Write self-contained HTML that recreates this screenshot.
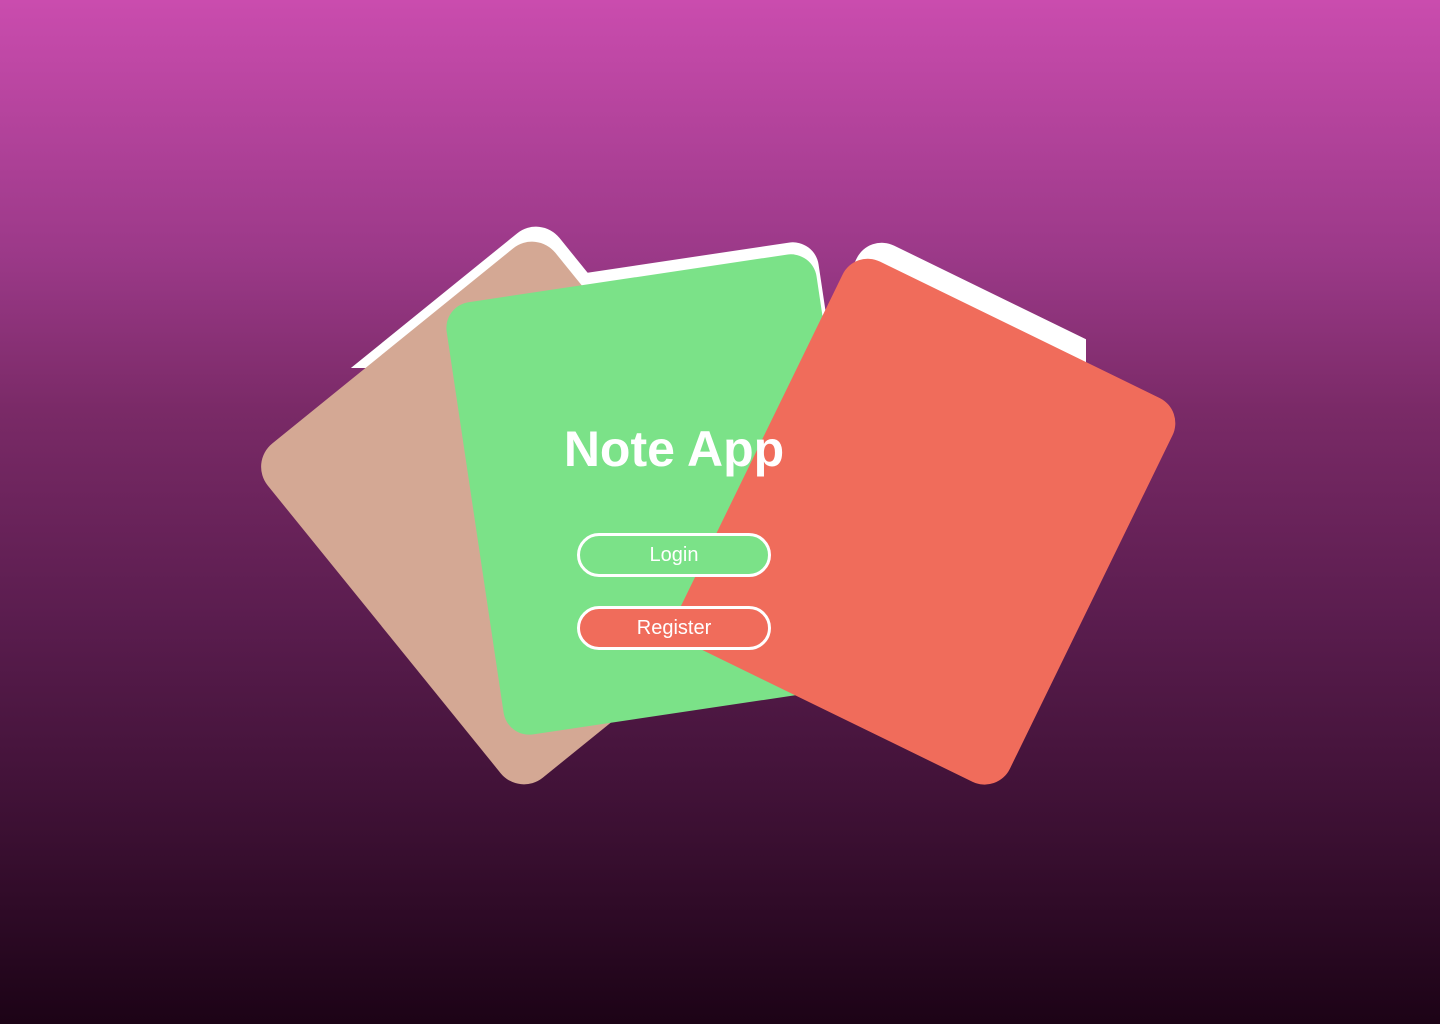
<!DOCTYPE html>
<html><head><meta charset="utf-8"><style>
html,body{margin:0;width:1440px;height:1024px;overflow:hidden}
body{background:linear-gradient(180deg,#ca4cae 0%,#9b3988 25%,#7a2a67 40%,#5b1d4f 60%,#3a0f31 82%,#1c0316 100%);font-family:"Liberation Sans",sans-serif;position:relative}
svg{position:absolute;left:0;top:0}
h1{position:absolute;left:0;width:1348px;text-align:center;top:420px;margin:0;color:#fff;font-size:50px;font-weight:bold}
.btn{position:absolute;left:577px;width:188px;height:38px;border:3px solid #fff;border-radius:22px;color:#fff;font-size:20px;text-align:center;line-height:38px}
</style></head><body>
<svg width="1440" height="1024">
<defs><clipPath id="c"><rect x="0" y="0" width="1086" height="368"/></clipPath></defs>
<g fill="#fff" clip-path="url(#c)">
<rect x="-185" y="-215" width="370" height="430" rx="30" transform="translate(532,498) rotate(-39)"/>
<rect x="-187" y="-218" width="374" height="437" rx="26" transform="translate(662,482) rotate(-8.5)"/>
<rect x="-183" y="-213" width="367" height="427" rx="28" transform="translate(940,505) rotate(26)"/>
</g>
<rect x="-185" y="-215" width="370" height="430" rx="30" fill="#d4a894" transform="translate(528,513) rotate(-39)"/>
<rect x="-187" y="-218" width="374" height="437" rx="26" fill="#7be288" transform="translate(660,494) rotate(-8.5)"/>
<rect x="-183" y="-213" width="367" height="427" rx="28" fill="#f06c5b" transform="translate(926,521) rotate(26)"/>
</svg>
<h1>Note App</h1>
<div class="btn" style="top:533px;background:#7be288">Login</div>
<div class="btn" style="top:606px;background:#f06c5b">Register</div>
</body></html>
